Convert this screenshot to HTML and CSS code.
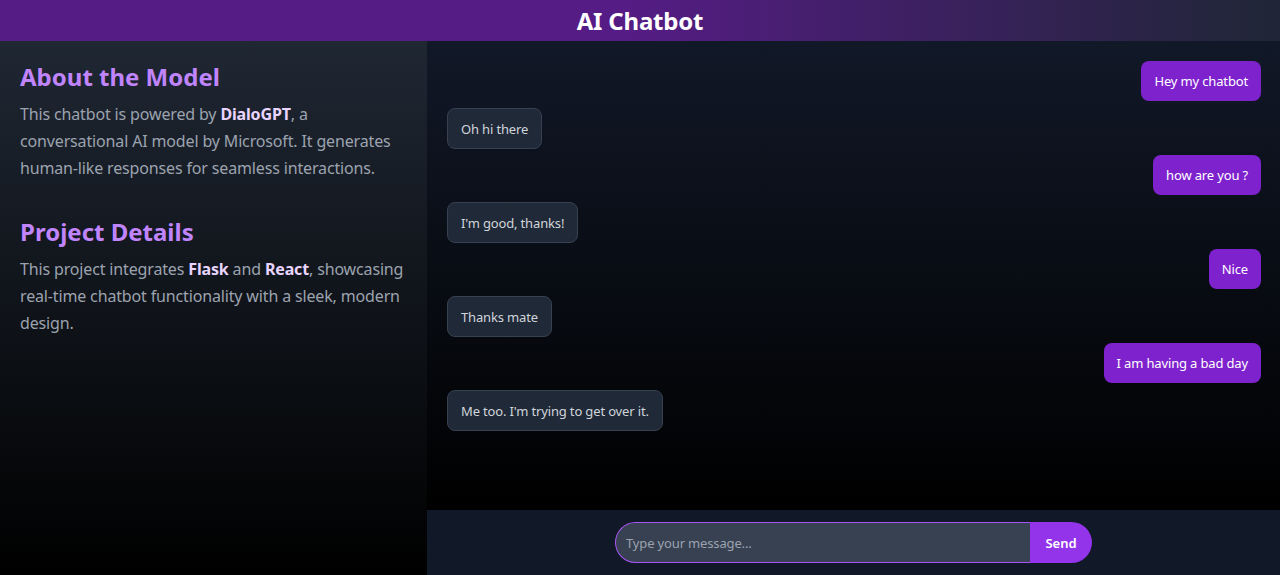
FILE: index.html
```html
<!DOCTYPE html>
<html lang="en">
<head>
<meta charset="utf-8">
<title>AI Chatbot</title>
<link rel="stylesheet" href="styles.css">
</head>
<body>
<div class="app">
  <header class="topbar"><h1 class="title">AI Chatbot</h1></header>
  <div class="main">
    <aside class="sidebar">
      <h2 class="side-title">About the Model</h2>
      <p class="side-text">This chatbot is powered by <strong class="hl">DialoGPT</strong>, a conversational AI model by Microsoft. It generates human-like responses for seamless interactions.</p>
      <h2 class="side-title">Project Details</h2>
      <p class="side-text">This project integrates <strong class="hl">Flask</strong> and <strong class="hl">React</strong>, showcasing real-time chatbot functionality with a sleek, modern design.</p>
    </aside>
    <section class="chat">
      <div class="messages">
        <div class="row user"><div class="bubble">Hey my chatbot</div></div>
        <div class="row bot"><div class="bubble">Oh hi there</div></div>
        <div class="row user"><div class="bubble">how are you ?</div></div>
        <div class="row bot"><div class="bubble">I'm good, thanks!</div></div>
        <div class="row user"><div class="bubble">Nice</div></div>
        <div class="row bot"><div class="bubble">Thanks mate</div></div>
        <div class="row user"><div class="bubble">I am having a bad day</div></div>
        <div class="row bot"><div class="bubble">Me too. I'm trying to get over it.</div></div>
      </div>
      <form class="composer">
        <input class="input" type="text" placeholder="Type your message..." autofocus>
        <button class="send" type="button">Send</button>
      </form>
    </section>
  </div>
</div>
</body>
</html>
```
FILE: styles.css
```css
* { box-sizing: border-box; }
html, body { margin: 0; padding: 0; height: 100%; }
body {
  font-family: "Noto Sans", "Open Sans", sans-serif;
  background: #000;
  color: #fff;
}
.app { display: flex; flex-direction: column; height: 100vh; }
.topbar {
  height: 41px;
  flex: none;
  display: flex;
  align-items: center;
  justify-content: center;
  background: linear-gradient(to right, #561c86 0%, #561c86 48%, #1f2636 100%);
}
.title {
  margin: 0;
  font-size: 24px;
  font-weight: 700;
  line-height: 32px;
  letter-spacing: -0.2px;
  color: #fff;
}
.main { flex: 1; display: flex; min-height: 0; }
.sidebar {
  width: 427px;
  flex: none;
  padding: 20px;
  background: linear-gradient(to bottom, #1f2733 0%, #000 100%);
}
.side-title {
  margin: 0 0 8px;
  font-size: 24px;
  line-height: 32px;
  font-weight: 700;
  color: #c084fc;
}
.side-text {
  margin: 0 0 34px;
  font-size: 16px;
  line-height: 27px;
  letter-spacing: -0.15px;
  color: #9ca3af;
}
.hl { color: #e9d5ff; font-weight: 700; }
.chat { flex: 1; display: flex; flex-direction: column; min-width: 0; }
.messages {
  flex: 1;
  padding: 20px 19px 20px 20px;
  display: flex;
  flex-direction: column;
  gap: 6.5px;
  background: linear-gradient(to bottom, #111827 0%, #000 100%);
}
.row { display: flex; }
.row.user { justify-content: flex-end; }
.row.bot { justify-content: flex-start; }
.bubble {
  font-size: 13px;
  line-height: 16px;
  letter-spacing: -0.15px;
  border-radius: 8px;
}
.user .bubble { background: #7e22ce; color: #fff; padding: 12px 13px; }
.bot .bubble { background: #1f2937; color: #d1d5db; border: 1px solid #374151; padding: 12px 13px 11px; }
.composer {
  flex: none;
  height: 65px;
  margin: 0;
  display: flex;
  align-items: center;
  justify-content: center;
  background: #111827;
}
.input {
  width: 415px;
  height: 41px;
  padding: 0 10px;
  font-family: inherit;
  font-size: 13px;
  letter-spacing: -0.15px;
  color: #e5e7eb;
  background: #374151;
  border: 1px solid #a855f7;
  border-right: none;
  border-radius: 21px 0 0 21px;
  outline: none;
}
.input::placeholder { color: #9ca3af; }
.send {
  width: 62px;
  height: 41px;
  font-family: inherit;
  font-size: 13px;
  font-weight: 600;
  color: #fff;
  background: #9333ea;
  border: none;
  border-radius: 0 21px 21px 0;
}
```
